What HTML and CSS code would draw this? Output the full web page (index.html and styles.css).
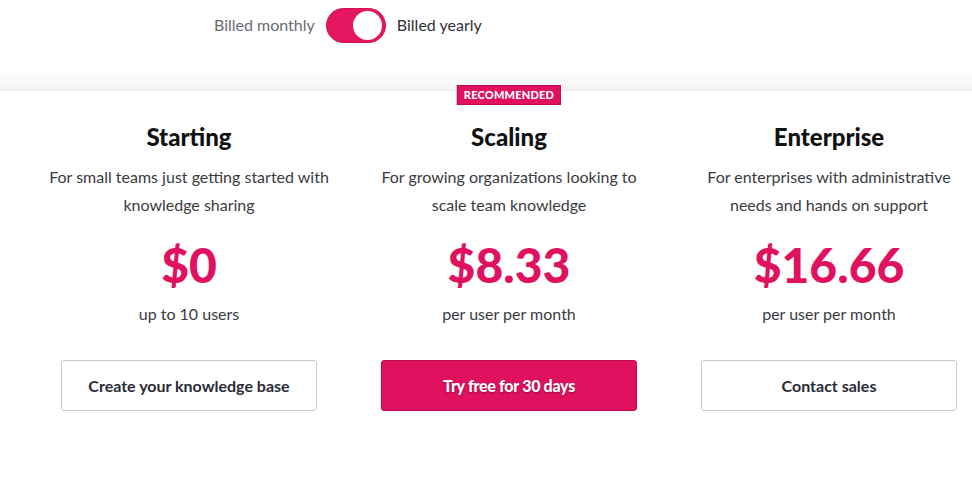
FILE: index.html
```html
<!DOCTYPE html>
<html lang="en">
<head>
  <meta charset="UTF-8" />
  <title>Pricing</title>
  <link rel="stylesheet" href="styles.css">
</head>
<body>
  <div class="billing">
    <div class="switch">
      <span class="label">Billed monthly</span>
      <span class="toggle"><span class="knob"></span></span>
      <span class="label active">Billed yearly</span>
    </div>
  </div>

  <div class="plans">
    <div class="plan">
      <h2>Starting</h2>
      <p class="desc">For small teams just getting started with knowledge sharing</p>
      <div class="price">$0</div>
      <p class="per">up to 10 users</p>
      <a class="btn">Create your knowledge base</a>
    </div>

    <div class="plan">
      <span class="badge">Recommended</span>
      <h2>Scaling</h2>
      <p class="desc">For growing organizations looking to scale team knowledge</p>
      <div class="price">$8.33</div>
      <p class="per">per user per month</p>
      <a class="btn primary">Try free for 30 days</a>
    </div>

    <div class="plan">
      <h2>Enterprise</h2>
      <p class="desc">For enterprises with administrative needs and hands on support</p>
      <div class="price">$16.66</div>
      <p class="per">per user per month</p>
      <a class="btn">Contact sales</a>
    </div>
  </div>
</body>
</html>
```

FILE: styles.css
```css
body {
  margin: 0;
  font-family: Lato, 'Liberation Sans', sans-serif;
  background: #fff;
  color: #2f3038;
  overflow: hidden;
}

.billing {
  height: 89px;
  background: linear-gradient(to bottom, #fff 0, #fff 68px, #f4f4f4 89px);
  border-bottom: 2px solid #eeeeee;
}

.switch {
  display: flex;
  align-items: center;
  padding: 8px 0 0 214px;
  gap: 11px;
  font-size: 16px;
}

.label {
  color: #6b6b73;
  position: relative;
  top: -1px;
}

.label.active {
  color: #2f3038;
}

.toggle {
  display: flex;
  align-items: center;
  justify-content: flex-end;
  width: 60px;
  height: 35px;
  box-sizing: border-box;
  padding: 3px;
  border-radius: 18px;
  background: #e5165f;
  border: 1px solid #d0104f;
}

.knob {
  width: 29px;
  height: 29px;
  border-radius: 50%;
  background: #fff;
}

.plans {
  display: flex;
  width: 960px;
  margin-left: 29px;
}

.plan {
  position: relative;
  width: 320px;
  flex: none;
  padding: 31px 32px 0;
  box-sizing: border-box;
  text-align: center;
}

.badge {
  position: absolute;
  top: -6px;
  left: 50%;
  transform: translateX(-50%);
  background: #e0115f;
  border: 1px solid #b80c4c;
  color: #fff;
  font-size: 11px;
  font-weight: 900;
  letter-spacing: 0.2px;
  text-transform: uppercase;
  padding: 2px 6px 2px;
  line-height: 14px;
}

h2 {
  margin: 0;
  font-size: 24px;
  font-weight: 900;
  color: #111;
  line-height: 30px;
}

.desc {
  margin: 11px -16px 0;
  font-size: 16px;
  line-height: 28px;
  color: #3a3b42;
}

.price {
  margin-top: 17px;
  font-size: 48px;
  font-weight: 900;
  line-height: 58px;
  color: #e0115f;
}

.per {
  margin: 6px 0 0;
  font-size: 16px;
  line-height: 28px;
  color: #3a3b42;
}

.btn {
  display: block;
  margin-top: 32px;
  height: 51px;
  line-height: 49px;
  box-sizing: border-box;
  border: 1px solid #c9c9cd;
  border-radius: 3px;
  font-size: 16px;
  font-weight: 700;
  color: #2a2b36;
  background: #fff;
}

.btn.primary {
  background: #e0115f;
  border-color: #c20d50;
  color: #fff;
  font-weight: 900;
  letter-spacing: -0.3px;
  text-shadow: 0 1px 2px rgba(0, 0, 0, 0.35);
}
```
